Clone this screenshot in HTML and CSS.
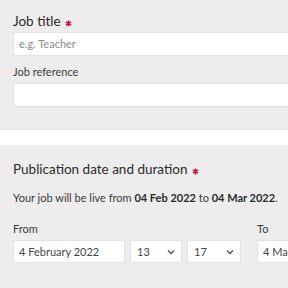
FILE: index.html
```html
<!DOCTYPE html>
<html>
<head>
<meta charset="utf-8">
<link rel="stylesheet" href="styles.css">
</head>
<body>
<div class="page">
  <section class="card card-first">
    <label class="label-lg">Job title <svg class="req" width="7" height="7" viewBox="0 0 8 8"><path d="M4 0.5 V7.5 M1 2.2 L7 5.8 M7 2.2 L1 5.8" stroke="#c8102e" stroke-width="1.8"/></svg></label>
    <div class="input input-wide"><span class="placeholder">e.g. Teacher</span></div>
    <label class="label-sm">Job reference</label>
    <div class="input input-wide input-ref"></div>
  </section>
  <section class="card card-second">
    <h2 class="label-lg heading">Publication date and duration <svg class="req" width="7" height="7" viewBox="0 0 8 8"><path d="M4 0.5 V7.5 M1 2.2 L7 5.8 M7 2.2 L1 5.8" stroke="#c8102e" stroke-width="1.8"/></svg></h2>
    <p class="info">Your job will be live from <b>04 Feb 2022</b> to <b>04 Mar 2022</b>.</p>
    <div class="date-row">
      <div class="date-group">
        <label class="label-sm">From</label>
        <div class="fields">
          <div class="input date">4 February 2022</div>
          <div class="input select sel-hour">13<svg class="chev" width="8" height="6" viewBox="0 0 8 6"><path d="M1 1.5 L4 4.5 L7 1.5" fill="none" stroke="#555" stroke-width="1.4"/></svg></div>
          <div class="input select sel-min">17<svg class="chev" width="8" height="6" viewBox="0 0 8 6"><path d="M1 1.5 L4 4.5 L7 1.5" fill="none" stroke="#555" stroke-width="1.4"/></svg></div>
        </div>
      </div>
      <div class="date-group">
        <label class="label-sm">To</label>
        <div class="fields">
          <div class="input date">4 March 2022</div>
        </div>
      </div>
    </div>
  </section>
</div>
</body>
</html>
```
FILE: styles.css
```css
html, body {
  margin: 0;
  padding: 0;
  background: #ffffff;
  overflow: hidden;
}
body {
  font-family: Lato, "Open Sans", sans-serif;
  color: #333333;
  width: 288px;
  height: 288px;
}
.page {
  width: 400px;
}
.card {
  background: #ededed;
  padding: 0 0 0 13px;
  display: flex;
  flex-direction: column;
  align-items: flex-start;
}
.card-first {
  padding-top: 11px;
  padding-bottom: 22px;
  border-bottom: 1px solid #e4e4e4;
}
.card-second {
  margin-top: 15px;
  padding-top: 14px;
  padding-bottom: 40px;
}
.label-lg {
  display: block;
  font-size: 13.5px;
  line-height: 20px;
  color: #2b2b2b;
  margin: 0 0 1px 0;
  font-weight: 400;
}
.req {
  display: inline-block;
  vertical-align: -1px;
  margin-left: 1px;
}
.label-sm {
  display: block;
  font-size: 11px;
  line-height: 16px;
  color: #3a3a3a;
}
.input {
  box-sizing: border-box;
  background: #ffffff;
  border: 1px solid #e2e2e2;
  height: 24px;
  font-size: 11px;
  line-height: 22px;
  padding: 0 5px;
  color: #444444;
}
.input-wide {
  width: 380px;
}
.placeholder {
  color: #8a8a8a;
}
.card-first .label-sm {
  margin-top: 8px;
  margin-bottom: 3px;
}
.heading {
  margin-bottom: 11px;
}
.info {
  margin: 0;
  font-size: 11px;
  line-height: 16px;
  color: #3a3a3a;
}
.info b {
  font-weight: 700;
  color: #2b2b2b;
}
.date-row {
  display: flex;
  gap: 16px;
  margin-top: 15px;
}
.date-group .label-sm {
  margin-bottom: 3px;
}
.fields {
  display: flex;
  gap: 5px;
}
.input.date {
  width: 112px;
  height: 23px;
  line-height: 21px;
}
.date-group:last-child .input.date {
  width: 100px;
}
.select {
  height: 23px;
  line-height: 21px;
  display: flex;
  align-items: center;
  justify-content: space-between;
  padding: 0 6px;
}
.sel-hour {
  width: 52px;
}
.sel-min {
  width: 54px;
}
.chev {
  display: block;
}
```
